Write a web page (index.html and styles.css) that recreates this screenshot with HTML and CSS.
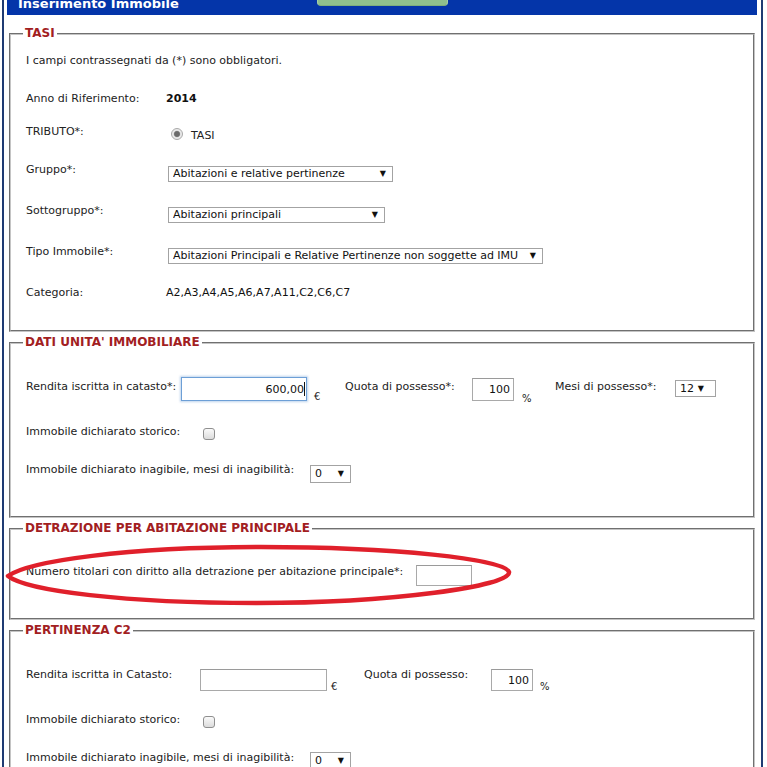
FILE: index.html
```html
<!DOCTYPE html>
<html lang="it">
<head>
<meta charset="utf-8">
<title>Inserimento Immobile</title>
<link rel="stylesheet" href="styles.css">
</head>
<body>
<div class="page">
  <div class="titlebar">
    <span class="title">Inserimento Immobile</span>
    <span class="tab-btn"></span>
  </div>

  <fieldset class="box box-tasi">
    <legend>TASI</legend>
    <div class="tasi-grid">
      <p class="note">I campi contrassegnati da (*) sono obbligatori.</p>
      <div class="row"><span class="lbl-col">Anno di Riferimento:</span><b class="val">2014</b></div>
      <div class="row">
        <span class="lbl-col">TRIBUTO*:</span>
        <label class="radio-val"><input class="radio" type="radio" name="tributo" checked><span class="radio-text">TASI</span></label>
      </div>
      <div class="row">
        <span class="lbl-col">Gruppo*:</span>
        <span class="sel sel-col"><select class="w-gruppo"><option>Abitazioni e relative pertinenze</option></select></span>
      </div>
      <div class="row">
        <span class="lbl-col">Sottogruppo*:</span>
        <span class="sel sel-col"><select class="w-sotto"><option>Abitazioni principali</option></select></span>
      </div>
      <div class="row">
        <span class="lbl-col">Tipo Immobile*:</span>
        <span class="sel sel-col"><select class="w-tipo"><option>Abitazioni Principali e Relative Pertinenze non soggette ad IMU</option></select></span>
      </div>
      <div class="row"><span class="lbl-col">Categoria:</span><span class="val">A2,A3,A4,A5,A6,A7,A11,C2,C6,C7</span></div>
    </div>
  </fieldset>

  <fieldset class="box box-dati">
    <legend>DATI UNITA' IMMOBILIARE</legend>
    <div class="rows">
      <div class="row">
        <span class="lbl pt3 w155">Rendita iscritta in catasto*:</span>
        <span class="field">
          <input class="txt txt-focus w126 h24" type="text" value="600,00">
          <span class="caret"></span>
        </span>
        <span class="unit w38">€</span>
        <span class="lbl pt3 w127">Quota di possesso*:</span>
        <input class="txt w42 h23 mt1" type="text" value="100">
        <span class="unit unit-pct w41">%</span>
        <span class="lbl pt3 w120">Mesi di possesso*:</span>
        <span class="sel sel-mesi mt3"><select class="w41"><option>12</option></select></span>
      </div>
      <div class="row gap19">
        <span class="lbl w174">Immobile dichiarato storico:</span>
        <input class="check" type="checkbox">
      </div>
      <div class="row gap23">
        <span class="lbl w284">Immobile dichiarato inagibile, mesi di inagibilità:</span>
        <span class="sel mt2"><select class="w41 h18"><option>0</option></select></span>
      </div>
    </div>
  </fieldset>

  <fieldset class="box box-detrazione">
    <legend>DETRAZIONE PER ABITAZIONE PRINCIPALE</legend>
    <div class="rows">
      <div class="row row-marked">
        <span class="lbl pt2 w390">Numero titolari con diritto alla detrazione per abitazione principale*:</span>
        <input class="txt w56 h21 mt2" type="text">
        <svg class="marker" viewBox="0 0 508 64" width="508" height="64" aria-hidden="true">
          <path d="M3,33 C24,18 122,4 256,4 C388,4 500,16 504,29 C507,43 386,60 252,60 C120,60 22,48 3,33 Z"/>
        </svg>
      </div>
    </div>
  </fieldset>

  <fieldset class="box">
    <legend>PERTINENZA C2</legend>
    <div class="rows rows-c2">
      <div class="row">
        <span class="lbl pt1 w174">Rendita iscritta in Catasto:</span>
        <input class="txt w127 h22 mt2" type="text">
        <span class="unit unit-c2 w37">€</span>
        <span class="lbl pt1 w127">Quota di possesso:</span>
        <input class="txt w42 h22 mt2" type="text" value="100">
        <span class="unit unit-pct2">%</span>
      </div>
      <div class="row gap19">
        <span class="lbl w174">Immobile dichiarato storico:</span>
        <input class="check" type="checkbox">
      </div>
      <div class="row gap23">
        <span class="lbl w284">Immobile dichiarato inagibile, mesi di inagibilità:</span>
        <span class="sel mt1"><select class="w41 h18"><option>0</option></select></span>
      </div>
    </div>
  </fieldset>
</div>
</body>
</html>
```

FILE: styles.css
```css
* {
  box-sizing: border-box;
}

html,
body {
  margin: 0;
  background: #fff;
}

body {
  font: 11px/14px "DejaVu Sans", Verdana, sans-serif;
  color: #222;
  overflow: hidden;
}

/* outer frame, scrolled a little past its title */
.page {
  margin: -15px 0 0 2px;
  width: 761px;
  padding-bottom: 60px;
  border-left: 2px solid #1f3b73;
  border-right: 2px solid #1f3b73;
}

.titlebar {
  position: relative;
  height: 30px;
  margin: 0 4px 0 3px;
  padding: 11px 0 0 11px;
  background: #0435a9;
  color: #fff;
  font: bold 13px/16px "DejaVu Sans", Verdana, sans-serif;
}

.tab-btn {
  position: absolute;
  left: 310px;
  top: 0;
  width: 131px;
  height: 21px;
  background: #8fc08d;
  border: 1px solid #a9d1a6;
  border-bottom-color: #7fae7c;
  border-radius: 0 0 4px 4px;
}

/* fieldsets */
.box {
  margin: 3px 6px 0 5px;
  padding: 0 15px 33px;
  min-width: 0;
  border: 2px groove #c4c4c4;
}

.box-tasi {
  margin-top: 11px;
  padding-bottom: 30px;
}

.box-dati {
  padding-bottom: 33px;
}

.box-detrazione {
  padding-bottom: 32px;
}

.box legend {
  margin-left: -3px;
  padding: 0 2px;
  font: bold 12px/15px "DejaVu Sans", Verdana, sans-serif;
  color: #a2201f;
}

/* TASI: label / value table */
.tasi-grid {
  display: grid;
  grid-template-rows: 38px 33px 38px 41px 41px 41px auto;
  padding-top: 13px;
}

.rows {
  display: flex;
  flex-direction: column;
  padding-top: 27px;
}

.rows-c2 {
  padding-top: 29px;
}

.row {
  display: flex;
  align-items: flex-start;
}

.gap19 { margin-top: 19px; }
.gap23 { margin-top: 23px; }

.note {
  margin: 0;
}

.lbl-col {
  flex: none;
  width: 140px;
}

.val {
  color: #111;
}

.lbl {
  flex: none;
}

.pt1 { padding-top: 1px; }
.pt2 { padding-top: 2px; }
.pt3 { padding-top: 3px; }

/* radio */
.radio-val {
  display: flex;
  align-items: flex-start;
}

.radio {
  appearance: none;
  -webkit-appearance: none;
  width: 12px;
  height: 12px;
  margin: 3px 8px 0 5px;
  border: 1px solid #a8a8a8;
  border-radius: 50%;
  background: radial-gradient(circle, #6a6a6a 0 2.4px, #9a9a9a 3px, #e6e6e6 3.6px, #f6f6f6 100%);
}

.radio-text {
  padding-top: 4px;
}

/* selects with a drawn arrow */
.sel {
  position: relative;
  display: inline-block;
  flex: none;
}

.sel-col {
  margin: 3px 0 0 2px;
}

.sel::after {
  content: "▼";
  position: absolute;
  right: 7px;
  top: 50%;
  transform: translateY(-52%);
  font: 8px/8px "DejaVu Sans", sans-serif;
  color: #111;
  pointer-events: none;
}

.sel-mesi::after {
  right: 12px;
}

.sel select {
  appearance: none;
  -webkit-appearance: none;
  display: block;
  height: 16px;
  margin: 0;
  padding: 0 4px;
  border: 1px solid #a3a3a3;
  border-radius: 0;
  background: #fff;
  color: #111;
  font: 11px/14px "DejaVu Sans", Verdana, sans-serif;
}

.w-gruppo { width: 225px; }
.w-sotto { width: 217px; height: 17px; }
.w-tipo { width: 375px; }
.sel select.w41 { width: 41px; height: 17px; }
.sel select.h18 { height: 18px; }

/* text inputs */
.field {
  position: relative;
  flex: none;
}

.txt {
  flex: none;
  display: block;
  margin: 0;
  padding: 0 3px;
  border: 1px solid #a9a9a9;
  border-top-color: #9a9a9a;
  background: #fff;
  color: #111;
  text-align: right;
  font: 11px/14px "DejaVu Sans", Verdana, sans-serif;
  outline: none;
}

.txt-focus {
  padding-right: 2px;
  border-color: #6d9fd6;
  box-shadow: 0 0 2px 1px rgba(110, 160, 215, 0.45);
}

.caret {
  position: absolute;
  right: 2px;
  top: 5px;
  width: 1px;
  height: 14px;
  background: #111;
}

.w126 { width: 126px; }
.w127 { width: 127px; }
.w42 { width: 42px; }
.w56 { width: 56px; }
.h21 { height: 21px; }
.h22 { height: 22px; }
.h23 { height: 23px; }
.h24 { height: 24px; }
.mt1 { margin-top: 1px; }
.mt2 { margin-top: 2px; }
.mt3 { margin-top: 3px; }

span.w127 { width: 127px; }
.w37 { width: 37px; }
.w38 { width: 38px; }
.w41 { width: 41px; }
.w120 { width: 120px; }
.w155 { width: 155px; }
.w174 { width: 174px; }
.w284 { width: 284px; }
.w390 { width: 390px; }

.unit {
  flex: none;
  padding: 13px 0 0 7px;
  font-size: 10px;
}

.unit-pct {
  padding: 15px 0 0 8px;
}

.unit-c2 {
  padding: 13px 0 0 4px;
}

.unit-pct2 {
  padding: 13px 0 0 7px;
}

/* checkbox */
.check {
  appearance: none;
  -webkit-appearance: none;
  flex: none;
  width: 12px;
  height: 12px;
  margin: 3px 0 0 3px;
  border: 1px solid #8f8f8f;
  border-radius: 3px;
  background: linear-gradient(#fafafa, #dcdcdc);
}

/* hand-drawn red ring around the holders field */
.row-marked {
  position: relative;
}

.marker {
  position: absolute;
  left: -21px;
  top: -20px;
  overflow: visible;
  pointer-events: none;
}

.marker path {
  fill: none;
  stroke: #e0202b;
  stroke-width: 4.5;
  stroke-linejoin: round;
}
```
